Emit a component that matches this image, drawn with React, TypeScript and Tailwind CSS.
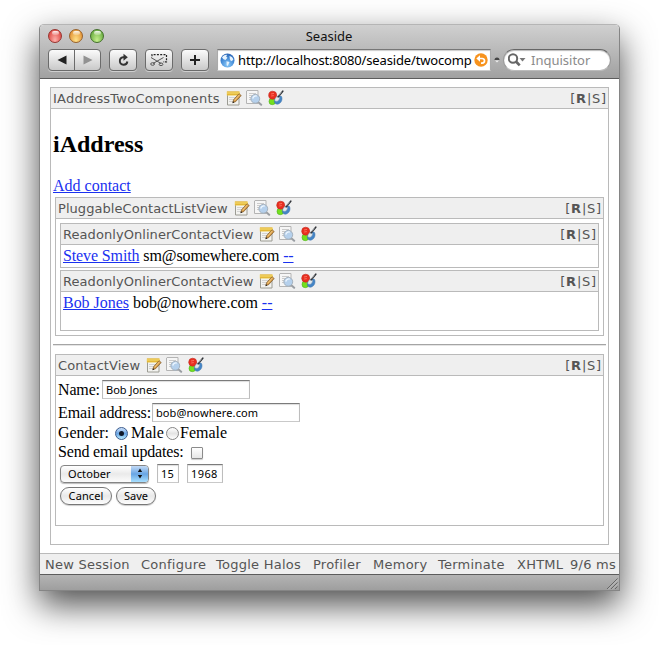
import type { ReactNode } from "react";

const verdana = "font-['DejaVu_Sans',sans-serif]";
const lucida = "font-['Noto_Sans','Open_Sans',sans-serif]";

function NoteIcon() {
  return (
    <svg width="16" height="16" viewBox="0 0 16 16">
      <path d="M1.500 3.500h11.500v11.500H1.500z" fill="#f3f3f0" stroke="#9c9c94" />
      <path d="M3 7.500h7M3 9.500h6M3 11.500h4" stroke="#cacaca" strokeWidth=".8" />
      <path d="M.8 1.500h13v4H.8z" fill="#f1ca45" />
      <path d="M2 5V1.200M4 5V1.200M6 5V1.200M8 5V1.200M10 5V1.200M12 5V1.200" stroke="#d19d24" strokeWidth=".8" />
      <path d="M1 3h13" stroke="#fbe98c" strokeWidth=".8" />
      <path d="M6.800 12.500l.8-2.800 5.400-6 2.200 1.800-5.600 6.200z" fill="#d49a48" stroke="#7a5526" strokeWidth=".7" />
      <path d="M8.600 10.300l5-5.600" stroke="#f7cf83" />
      <path d="M6.400 13.200l.7-1.900 1.300 1.100z" fill="#222" />
    </svg>
  );
}

function InspectIcon() {
  return (
    <svg width="17" height="16" viewBox="0 0 17 16">
      <path d="M1 .5h11v13H.5V1z" fill="#f6f6f6" stroke="#b4b4b4" />
      <path d="M3 3.500h7M3 5.500h3M3 7.500h2M3 9.500h2" stroke="#cbcbcb" />
      <path d="M12.300 12.200l2.900 2.600" stroke="#9a9ea3" strokeWidth="2" strokeLinecap="round" />
      <circle cx="9.300" cy="8.800" r="4.400" fill="#b5d0ec" stroke="#a3b0bd" />
      <path d="M6.800 8.600a3 3 0 0 1 4-2.500" stroke="#eef7ff" strokeWidth="1.300" fill="none" />
    </svg>
  );
}

function PaletteIcon() {
  return (
    <svg width="16" height="16" viewBox="0 0 16 16">
      <circle cx="4.300" cy="11.400" r="3.300" fill="#74e01e" stroke="#4cae1f" strokeWidth=".6" />
      <path d="M6.500 10c.5-3 4-5 7-3.500 1.500 3-.5 7.500-4.300 7.700-2.300 0-3.200-2-2.700-4.200z" fill="#4585c6" stroke="#376fa8" strokeWidth=".5" />
      <circle cx="4.700" cy="5.200" r="4" fill="#e92f21" stroke="#c2281e" strokeWidth=".6" />
      <path d="M3 4l3-.6M3.200 6l2.600-.4" stroke="#ff8c79" strokeWidth=".7" />
      <path d="M6.800 10.400c0-2.200 1.700-4.400 3.700-3.900 1.700 1 .8 3.500-.8 4.400-1.100.5-2.400.3-2.900-.5z" fill="#e3e9ee" stroke="#9aa9b6" strokeWidth=".5" />
      <path d="M10.200 6.800l4.600-5.600" stroke="#303338" strokeWidth="1.600" strokeLinecap="round" />
      <path d="M10.500 5.900l3-3.600" stroke="#a8acb1" strokeWidth=".7" />
    </svg>
  );
}

function HaloHeader({ title, tracking }: { title: string; tracking: string }) {
  return (
    <div className={`flex h-[21px] shrink-0 items-center border-b border-[#bababa] bg-[#efefef] pr-[1px] pl-[2px] text-[13px] leading-[20px] text-[#555] ${verdana}`}>
      <span className={`pt-[1px] whitespace-nowrap ${tracking}`}>{title}</span>
      <span className="ml-[6px] flex items-center">
        <NoteIcon />
        <span className="ml-[4px]"><InspectIcon /></span>
        <span className="ml-[5px]"><PaletteIcon /></span>
      </span>
      <span className="ml-auto pt-[1px] tracking-[0.8px] whitespace-nowrap">
        [<b>R</b>|S]
      </span>
    </div>
  );
}

function Halo({ title, tracking = "tracking-[0.06px]", className, children }: { title: string; tracking?: string; className: string; children: ReactNode }) {
  return (
    <section className={`flex flex-col border border-[#bababa] ${className}`}>
      <HaloHeader title={title} tracking={tracking} />
      {children}
    </section>
  );
}

function Link({ children }: { children: ReactNode }) {
  return <a className="text-[#1a31f0] underline decoration-1 underline-offset-[1px]">{children}</a>;
}

function Field({ className, children }: { className: string; children: ReactNode }) {
  return (
    <span className={`flex h-[19px] items-center border border-t-[#7b7b7b] border-r-[#bdbdbd] border-b-[#c9c9c9] border-l-[#bdbdbd] bg-white pt-[1px] pl-[3px] text-[11px] leading-[16px] whitespace-nowrap shadow-[inset_0_1px_1px_#ddd] ${lucida} ${className}`}>
      {children}
    </span>
  );
}

const toolButton = "flex h-[22px] items-center justify-center rounded-[4px] border border-[#6b6b6b] bg-linear-to-b from-[#fbfbfb] to-[#c9c9c9] shadow-[0_1px_0_#cfcfcf]";

function Toolbar() {
  return (
    <div className="flex h-[33px] items-start pl-[8px] pt-[3px]">
      <div className={`${toolButton} w-[53px]`}>
        <span className="flex h-full w-[26px] items-center justify-center border-r border-[#6b6b6b]">
          <svg width="10" height="10" viewBox="0 0 10 10"><path d="M.5 5L9.500.5v9z" fill="#222" /></svg>
        </span>
        <span className="flex h-full w-[25px] items-center justify-center">
          <svg width="10" height="10" viewBox="0 0 10 10"><path d="M9.500 5L.5.5v9z" fill="#929292" /></svg>
        </span>
      </div>
      <div className={`${toolButton} ml-[8px] w-[28px]`}>
        <svg width="13" height="14" viewBox="0 0 13 14">
          <path d="M8 4.200H6.200a3.800 3.800 0 1 0 4.200 4.300" fill="none" stroke="#333" strokeWidth="1.900" />
          <path d="M6.500 .7l4.300 3.500-4.300 3.500z" fill="#333" />
        </svg>
      </div>
      <div className={`${toolButton} ml-[8px] w-[28px]`}>
        <svg width="18" height="14" viewBox="0 0 18 14">
          <path d="M2 3.300V1.600h14.500v7.200h-3.500" fill="none" stroke="#222" strokeWidth="1.200" strokeDasharray="2 1.300" />
          <path d="M1 4.500l10 6M3 10.500l10.500-6" stroke="#555" strokeWidth="1" />
          <ellipse cx="2.600" cy="11" rx="1.900" ry="1.300" fill="none" stroke="#555" />
          <ellipse cx="11" cy="11.300" rx="1.900" ry="1.300" fill="none" stroke="#555" />
        </svg>
      </div>
      <div className={`${toolButton} ml-[8px] w-[28px]`}>
        <svg width="12" height="12" viewBox="0 0 12 12"><path d="M6 1v10M1 6h10" stroke="#222" strokeWidth="2" /></svg>
      </div>
      <div className="ml-[8px] flex h-[22px] w-[274px] items-center border border-t-[#777] border-r-[#aaa] border-b-[#ccc] border-l-[#aaa] bg-white pl-[2px] shadow-[inset_0_1px_1px_#ccc]">
        <svg width="15" height="15" viewBox="0 0 15 15" className="shrink-0">
          <defs>
            <radialGradient id="globe" cx=".5" cy=".8" r=".85">
              <stop offset="0" stopColor="#8ccbfa" />
              <stop offset=".6" stopColor="#3f86d3" />
              <stop offset="1" stopColor="#2a5fae" />
            </radialGradient>
          </defs>
          <circle cx="7.500" cy="7.500" r="7" fill="url(#globe)" />
          <path d="M2 4.500c1.500-2.300 3.500-3 5-2.500L6.200 3.800l1.300 1L5.500 7l-2-.8zM6.500 8.200l3 .8-1.800 4-1-.8zM9.500 3c2 .3 3.800 2 3.800 4L11 8.300 9.800 6z" fill="#e6f3fd" />
        </svg>
        <span className={`ml-[3px] w-[236px] text-[13px] leading-[20px] tracking-[-0.15px] whitespace-nowrap text-black ${lucida}`}>http://localhost:8080/seaside/twocomp</span>
        <svg width="14" height="14" viewBox="0 0 14 14" className="shrink-0">
          <circle cx="7" cy="7" r="6.700" fill="#f7931e" />
          <path d="M4.500 5.500h3.700a2.200 2.200 0 0 1 0 4.600H7" fill="none" stroke="#fff" strokeWidth="1.700" />
          <path d="M6 2.300v6.400L2.300 5.500z" fill="#fff" />
        </svg>
      </div>
      <svg width="6" height="8" viewBox="0 0 6 8" className="mt-[6px] ml-[3px]">
        <path d="M.5 5a2.500 2.500 0 0 1 5 0z" fill="#444" /><path d="M1 5.500h4L3 7.500z" fill="#eee" />
      </svg>
      <div className={`ml-[3px] flex h-[22px] w-[108px] items-center rounded-full border border-t-[#666] border-r-[#999] border-b-[#bbb] border-l-[#999] bg-white pl-[4px] text-[13px] leading-[20px] text-[#8b8b8b] shadow-[inset_0_1px_1px_#bbb] ${lucida}`}>
        <svg width="18" height="14" viewBox="0 0 18 14">
          <circle cx="5" cy="5.500" r="4.200" fill="none" stroke="#666" strokeWidth="2" />
          <path d="M8 8.500l3.700 3.900" stroke="#666" strokeWidth="2.600" />
          <path d="M11.500 5h6L14.500 8.500z" fill="#777" />
        </svg>
        <span className="ml-[5px]">Inquisitor</span>
      </div>
    </div>
  );
}

function Light({ className }: { className: string }) {
  return (
    <span className={`flex size-[14px] justify-center rounded-full border pt-[1px] ${className}`}>
      <span className="h-[4px] w-[7px] rounded-full bg-linear-to-b from-white/90 to-white/20" />
    </span>
  );
}

function TitleBar() {
  return (
    <div className="grid h-[21px] grid-cols-[80px_1fr_80px] items-start">
      <div className="flex gap-[7px] pt-[4px] pl-[8px]">
        <Light className="border-[#97342f] bg-radial-[at_50%_85%] from-[#ffb0ab] to-[#d6342f]" />
        <Light className="border-[#98612a] bg-radial-[at_50%_85%] from-[#ffe28a] to-[#df8425]" />
        <Light className="border-[#43702b] bg-radial-[at_50%_85%] from-[#c6f08e] to-[#58a032]" />
      </div>
      <span className={`pr-[1px] text-center text-[13px] leading-[22px] text-[#111] ${lucida}`}>Seaside</span>
    </div>
  );
}

const pill = `flex h-[18px] items-center justify-center rounded-full border border-[#777] bg-linear-to-b from-white via-[#e9e9e9] to-[#fdfdfd] text-[11px] leading-[16px] shadow-[0_1px_1px_#ccc] ${lucida}`;

function ContactForm() {
  return (
    <div className="flex flex-col pl-[2px] text-[16px] leading-[18px]">
      <div className="mt-[4px] flex h-[19px] items-center"><span className="w-[44px] tracking-[-0.15px] whitespace-nowrap">Name:</span><Field className="w-[148px]">Bob Jones</Field></div>
      <div className="mt-[4px] flex h-[19px] items-center"><span className="w-[94px] tracking-[-0.12px] whitespace-nowrap">Email address:</span><Field className="w-[148px] tracking-[0.1px]">bob@nowhere.com</Field></div>
      <div className="mt-[2px] flex h-[18px] items-center">
        <span className="w-[57px] tracking-[-0.1px]">Gender:</span>
        <span className="mt-[1px] flex size-[13px] items-center justify-center rounded-full border border-[#3d5d8e] bg-linear-to-b from-[#cfe2fa] via-[#69a4e3] to-[#b9ecff]"><span className="size-[5px] rounded-full bg-[#101828]" /></span>
        <span className="ml-[3px] w-[35px]">Male</span>
        <span className="mt-[1px] size-[13px] rounded-full border border-[#858585] bg-linear-to-b from-white via-[#e4e4e4] to-white" />
        <span className="ml-[1px]">Female</span>
      </div>
      <div className="mt-[1px] flex h-[18px] items-center">
        <span className="w-[133px] tracking-[-0.18px] whitespace-nowrap">Send email updates:</span>
        <span className="mt-[1px] size-[12px] rounded-[1px] border border-[#8b8b8b] bg-linear-to-b from-white to-[#e6e6e6] shadow-[0_1px_1px_#ccc]" />
      </div>
      <div className="mt-[3px] flex h-[19px] items-center pl-[2px]">
        <span className={`flex h-[18px] w-[89px] items-center overflow-hidden rounded-[4px] border border-[#858585] bg-linear-to-b from-white via-[#eaeaea] to-[#fcfcfc] pl-[7px] text-[11px] leading-[16px] tracking-[0.1px] shadow-[0_1px_1px_#bbb] ${lucida}`}>
          October
          <span className="ml-auto flex h-full w-[17px] items-center justify-center bg-linear-to-b from-[#c3daf5] via-[#68a5e4] to-[#a8e0ff]">
            <svg width="6" height="11" viewBox="0 0 6 11"><path d="M.8 4L3 .5 5.200 4zM.8 7L3 10.500 5.200 7z" fill="#111" /></svg>
          </span>
        </span>
        <Field className="ml-[8px] w-[22px] tracking-[0.3px]">15</Field>
        <Field className="ml-[8px] w-[36px] tracking-[0.4px]">1968</Field>
      </div>
      <div className="mt-[4px] flex gap-[4px] pl-[2px]">
        <span className={`${pill} w-[52px] tracking-[0.1px]`}>Cancel</span>
        <span className={`${pill} w-[40px]`}>Save</span>
      </div>
    </div>
  );
}

export default function App() {
  return (
    <div className="h-[645px] w-[659px] overflow-hidden bg-white pt-[24px] pl-[39px] font-['Liberation_Serif',serif] text-black">
      <div className="flex h-[567px] w-[581px] flex-col rounded-t-[5px] border border-[#858585] border-t-[#b5b5b5] bg-white shadow-[0_14px_34px_rgba(0,0,0,0.7)]">
        <header className="flex h-[54px] shrink-0 flex-col rounded-t-[4px] border-b border-[#5c5c5c] bg-linear-to-b from-[#d0d0d0] to-[#a1a1a1]">
          <TitleBar />
          <Toolbar />
        </header>
        <main className="flex h-[474px] flex-col pt-[8px] pl-[10px]">
          <Halo title="IAddressTwoComponents" tracking="tracking-[0.22px]" className="h-[458px] w-[559px]">
            <div className="flex flex-col pl-[2px]">
              <h1 className="mt-[21px] text-[24px] leading-[28px] font-bold">iAddress</h1>
              <div className="mt-[19px] h-[20px] text-[16px] leading-[18px]"><Link>Add contact</Link></div>
              <Halo title="PluggableContactListView" className="ml-[2px] h-[139px] w-[549px]">
                <div className="flex flex-col gap-[2px] pt-[4px] pl-[4px]">
                  <Halo title="ReadonlyOnlinerContactView" className="h-[45px] w-[539px]">
                    <p className="pt-[2px] pl-[2px] text-[16px] leading-[18px] tracking-[-0.12px]"><Link>Steve Smith</Link> sm@somewhere.com <Link>--</Link></p>
                  </Halo>
                  <Halo title="ReadonlyOnlinerContactView" className="h-[61px] w-[539px]">
                    <p className="pt-[2px] pl-[2px] text-[16px] leading-[18px] tracking-[-0.03px]"><Link>Bob Jones</Link> bob@nowhere.com <Link>--</Link></p>
                  </Halo>
                </div>
              </Halo>
              <hr className="mt-[8px] h-[2px] w-[553px] border-t border-b border-t-[#a5a5a5] border-b-[#e5e5e5]" />
              <Halo title="ContactView" className="mt-[8px] ml-[2px] h-[172px] w-[549px]">
                <ContactForm />
              </Halo>
            </div>
          </Halo>
        </main>
        <nav className={`flex h-[21px] shrink-0 items-center border-t border-[#bababa] bg-[#efefef] pt-[1px] pl-[5px] text-[13px] leading-[19px] tracking-[0.25px] whitespace-nowrap text-[#555] ${verdana}`}>
          <span className="w-[96px]">New Session</span>
          <span className="w-[75px]">Configure</span>
          <span className="w-[97px]">Toggle Halos</span>
          <span className="w-[60px]">Profiler</span>
          <span className="w-[65px]">Memory</span>
          <span className="w-[79px]">Terminate</span>
          <span className="w-[53px]">XHTML</span>
          <span>9/6 ms</span>
        </nav>
        <footer className="flex h-[16px] shrink-0 items-end justify-end border-t border-[#5c5c5c] bg-linear-to-b from-[#b4b4b4] to-[#9e9e9e]">
          <svg width="13" height="13" viewBox="0 0 13 13">
            <path d="M1 12L11.500 1.500M5 12l6.500-6.500M9 12l2.500-2.500" stroke="#666" />
            <path d="M2 12.500L12 2.500M6 12.500l6-6" stroke="#ccc" strokeWidth=".6" />
          </svg>
        </footer>
      </div>
    </div>
  );
}
